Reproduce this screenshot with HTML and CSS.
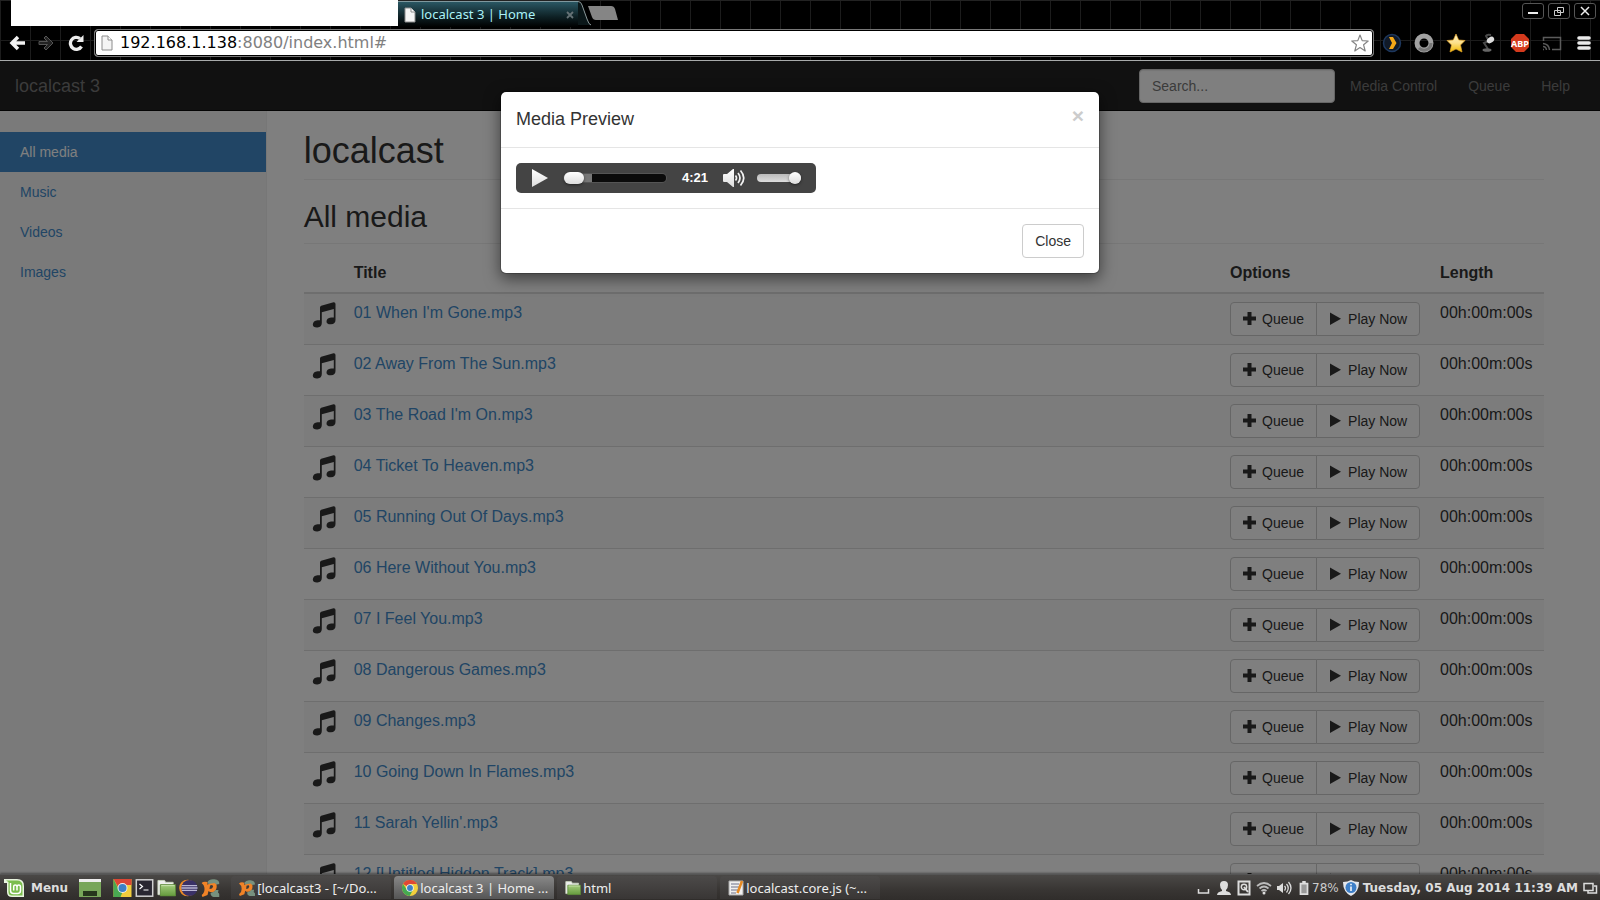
FILE: index.html
```html
<!DOCTYPE html>
<html lang="en">
<head>
<meta charset="utf-8">
<title>localcast 3 | Home</title>
<link rel="stylesheet" href="styles.css">
</head>
<body>
<svg class="defs" aria-hidden="true">
  <defs>
    <linearGradient id="gold" x1="0" y1="0" x2="0" y2="1"><stop offset="0" stop-color="#fff3c8"/><stop offset=".5" stop-color="#fce08a"/><stop offset="1" stop-color="#f2bb00"/></linearGradient>
    <linearGradient id="silver" x1="0" y1="0" x2="0" y2="1"><stop offset="0" stop-color="#fff"/><stop offset="1" stop-color="#ddd"/></linearGradient>
    <linearGradient id="leaf" x1="0" y1="0" x2="0" y2="1"><stop offset="0" stop-color="#a3cc7c"/><stop offset="1" stop-color="#649a3c"/></linearGradient>
    <symbol id="music" viewBox="0 0 24 26"><path d="M8 5.500 Q8 4.300 9.200 3.800 L21.500 .2 Q23.500 0 23.500 2 V18 Q23.500 22 19 22.300 Q14.500 22.500 14.500 19.500 Q14.500 16 19 15.500 L21.800 15.600 V7 L9.800 10.300 V21 Q9.800 25 5.500 25.500 Q.8 25.700 .8 22.500 Q1 18.800 5.500 18.200 L8 18.300 Z"/></symbol>
    <symbol id="plus" viewBox="0 0 14 14"><path d="M4.500 0h4v4.500H13v4H8.500V13h-4V8.500H0v-4h4.500z"/></symbol>
    <symbol id="play" viewBox="0 0 14 14"><path d="M1 .5 12 6.700 1 13z"/></symbol>
    <symbol id="page" viewBox="0 0 12 16"><path d="M1 1h6l4 4v10H1z" fill="#f4f4f4" stroke="#8c8c8c"/><path d="M7 1v4h4" fill="#fff" stroke="#8c8c8c"/></symbol>
    <symbol id="chrome" viewBox="0 0 18 18"><circle cx="9" cy="9" r="9" fill="#f3cf3d"/><path d="M9 9 1.200 4.500A9 9 0 0 1 16.800 4.500H9z" fill="#df4735"/><path d="M1.200 4.500A9 9 0 0 0 8.600 18L12.500 11 9 9 5.500 11z" fill="#45a951"/><circle cx="9" cy="9" r="4.200" fill="#f5f5f5"/><circle cx="9" cy="9" r="3.300" fill="#3d80c5"/></symbol>
    <symbol id="folder" viewBox="0 0 20 18"><path d="M1 1h7l1 2h8v13H1z" fill="#eee" stroke="#c9d5bd"/><path d="M3.500 5.500h16v12h-16z" fill="url(#leaf)" stroke="#5c8939"/><path d="M4.500 6.500h14" stroke="#cbe5b0"/></symbol>
    <symbol id="aptana" viewBox="0 0 18 18"><path d="M0 4Q2 2 6 3v3l3-3q4-1 6 2 1 6-3 8-3 1-5-1l-1 4-5 2-1-2q3-2 3-6Q3 6 0 4z" fill="#f08327"/><path d="M8.500 6.500q3-1.500 3 1-.5 2.500-3.500 2.500z" fill="#3c3937"/><path d="M6 3Q8-.5 13 .3q5 .7 5 4.700l-3 .5-2-1.500-6 1z" fill="#77917f"/><path d="M9 14q4-1 5-3h3l-.5 2.500 1.500 1.500v3h-6q-3-1-3-4z" fill="#77917f"/></symbol>
  </defs>
</svg>

<div class="screen">
  <header class="browser">
    <div class="tabs">
      <div class="blank-tab"></div>
      <div class="tab">
        <svg class="tab-page"><use href="#page"/></svg>
        <span class="tab-title">localcast 3 | Home</span>
        <button class="tab-close" aria-label="Close tab"><svg viewBox="0 0 8 8"><path d="M1 1l6 6M7 1 1 7" stroke="#667276" stroke-width="1.800"/></svg></button>
      </div>
      <svg class="tab-edge" viewBox="0 0 14 26"><path d="M0 1.500Q3 1.500 4 5l5 14q2 6 4 6H0z" fill="#0b1719"/><path d="M0 1.500Q3 1.500 4 5l5 14q2 6 4 6" fill="none" stroke="#8c999b"/></svg>
      <button class="new-tab" aria-label="New tab"><svg viewBox="0 0 31 14"><path d="M0 0h23q3 0 4 3l3 11H8q-3 0-4-3z" fill="#858585"/></svg></button>
      <div class="window-buttons">
        <button aria-label="Minimize"><svg viewBox="0 0 20 14"><path d="M5 9h10" stroke="#eee" stroke-width="2"/></svg></button>
        <button aria-label="Restore"><svg viewBox="0 0 20 14"><path d="M8.500 3.500h6v5h-6zM5.500 6.500h6v5h-6z" fill="none" stroke="#ccc"/></svg></button>
        <button aria-label="Close window"><svg viewBox="0 0 20 14"><path d="M6 3l8 8M14 3l-8 8" stroke="#eee" stroke-width="1.500"/></svg></button>
      </div>
    </div>
    <div class="toolbar">
      <div class="tools">
        <button aria-label="Back"><svg viewBox="0 0 18 16"><path d="M16 8H3M9 2 3 8l6 6" fill="none" stroke="#f2f2f2" stroke-width="3.500"/></svg></button>
        <button aria-label="Forward"><svg viewBox="0 0 18 16"><path d="M1 6.500h8.500L6 3l2-2 7 7-7 7-2-2 3.500-3.500H1z" fill="#222" stroke="#555"/></svg></button>
        <button aria-label="Reload"><svg viewBox="0 0 18 16"><path d="M14.500 11.500A6 6 0 1 1 13 3.500" fill="none" stroke="#eee" stroke-width="3.300"/><path d="M16.500 0v7H9.500z" fill="#eee"/></svg></button>
      </div>
      <div class="address">
        <svg class="address-page"><use href="#page"/></svg>
        <span class="url">192.168.1.138<span class="path">:8080/index.html#</span></span>
        <button aria-label="Bookmark this page"><svg class="star" viewBox="0 0 18 18"><path d="M9 1l2.200 5.600 6 .4-4.600 3.800L14.200 17 9 13.500 3.800 17l1.600-6.200L.8 7l6-.4z" fill="#fff" stroke="#858585" stroke-width="1.200" stroke-linejoin="round"/></svg></button>
      </div>
      <div class="extensions">
        <button aria-label="Play extension"><svg viewBox="0 0 20 20"><circle cx="10" cy="10" r="8.500" fill="#111a28" stroke="#1d375d" stroke-width="1.500"/><path d="M7 4h4l3.500 6L11 16H7l3-6z" fill="#f5a817"/></svg></button>
        <button aria-label="Ring extension"><svg viewBox="0 0 20 20"><circle cx="10" cy="10" r="7" fill="none" stroke="#a2a2a2" stroke-width="5"/><path d="M5 15a7 7 0 0 0 12-5" fill="none" stroke="#777" stroke-width="3"/></svg></button>
        <button aria-label="Star extension"><svg viewBox="0 0 20 20"><path d="M10 1l2.700 6 6.300.5-4.500 4.500 1.500 7-6-3-6 3 1.500-7L1 7.500 7.300 7z" fill="url(#gold)" stroke="#e4a52b" stroke-width=".7"/></svg></button>
        <button aria-label="Lamp extension"><svg viewBox="0 0 20 20"><path d="M13 2Q9 1 8 3l3 5-5 2 4 6" fill="none" stroke="#4a4a4a" stroke-width="2"/><ellipse cx="12.500" cy="7" rx="4" ry="2.800" transform="rotate(-35 12.500 7)" fill="#ddd"/><ellipse cx="9" cy="17" rx="4.500" ry="1.800" fill="#666"/></svg></button>
        <button aria-label="Adblock Plus"><svg viewBox="0 0 20 20"><path d="M6 1h8l5 5v8l-5 5H6l-5-5V6z" fill="#d43a1d"/><text x="10" y="13.500" text-anchor="middle" class="abp">ABP</text></svg></button>
        <button aria-label="Cast"><svg viewBox="0 0 20 20"><path d="M1.500 8V4.500h17v12H10M1 16.500h1M1 13.500q3 0 3.500 3.500M1 10.500q6 .5 6.500 6.500" fill="none" stroke="#5b5b5b" stroke-width="1.500"/></svg></button>
        <button aria-label="Browser menu"><svg viewBox="0 0 20 20"><path d="M5 5h10M5 10h10M5 15h10" stroke="#eaeaea" stroke-width="3.600" stroke-linecap="round"/></svg></button>
      </div>
    </div>
  </header>

  <div class="viewport">
    <nav class="navbar">
      <a class="brand" href="#">localcast 3</a>
      <input class="search" type="text" placeholder="Search..." aria-label="Search">
      <div class="nav-links"><a href="#">Media Control</a><a href="#">Queue</a><a href="#">Help</a></div>
    </nav>
    <div class="columns">
      <aside class="sidebar"><a class="active" href="#">All media</a><a href="#">Music</a><a href="#">Videos</a><a href="#">Images</a></aside>
      <main class="main">
        <h1>localcast</h1>
        <h2>All media</h2>
        <table class="media">
          <colgroup><col class="col-icon"><col><col class="col-options"><col class="col-length"></colgroup>
          <thead><tr><th></th><th>Title</th><th>Options</th><th>Length</th></tr></thead>
          <tbody>
            <tr><td><svg class="note"><use href="#music"/></svg></td><td><a href="#">01 When I'm Gone.mp3</a></td><td><div class="group"><button><svg><use href="#plus"/></svg>Queue</button><button><svg><use href="#play"/></svg>Play Now</button></div></td><td>00h:00m:00s</td></tr>
            <tr><td><svg class="note"><use href="#music"/></svg></td><td><a href="#">02 Away From The Sun.mp3</a></td><td><div class="group"><button><svg><use href="#plus"/></svg>Queue</button><button><svg><use href="#play"/></svg>Play Now</button></div></td><td>00h:00m:00s</td></tr>
            <tr><td><svg class="note"><use href="#music"/></svg></td><td><a href="#">03 The Road I'm On.mp3</a></td><td><div class="group"><button><svg><use href="#plus"/></svg>Queue</button><button><svg><use href="#play"/></svg>Play Now</button></div></td><td>00h:00m:00s</td></tr>
            <tr><td><svg class="note"><use href="#music"/></svg></td><td><a href="#">04 Ticket To Heaven.mp3</a></td><td><div class="group"><button><svg><use href="#plus"/></svg>Queue</button><button><svg><use href="#play"/></svg>Play Now</button></div></td><td>00h:00m:00s</td></tr>
            <tr><td><svg class="note"><use href="#music"/></svg></td><td><a href="#">05 Running Out Of Days.mp3</a></td><td><div class="group"><button><svg><use href="#plus"/></svg>Queue</button><button><svg><use href="#play"/></svg>Play Now</button></div></td><td>00h:00m:00s</td></tr>
            <tr><td><svg class="note"><use href="#music"/></svg></td><td><a href="#">06 Here Without You.mp3</a></td><td><div class="group"><button><svg><use href="#plus"/></svg>Queue</button><button><svg><use href="#play"/></svg>Play Now</button></div></td><td>00h:00m:00s</td></tr>
            <tr><td><svg class="note"><use href="#music"/></svg></td><td><a href="#">07 I Feel You.mp3</a></td><td><div class="group"><button><svg><use href="#plus"/></svg>Queue</button><button><svg><use href="#play"/></svg>Play Now</button></div></td><td>00h:00m:00s</td></tr>
            <tr><td><svg class="note"><use href="#music"/></svg></td><td><a href="#">08 Dangerous Games.mp3</a></td><td><div class="group"><button><svg><use href="#plus"/></svg>Queue</button><button><svg><use href="#play"/></svg>Play Now</button></div></td><td>00h:00m:00s</td></tr>
            <tr><td><svg class="note"><use href="#music"/></svg></td><td><a href="#">09 Changes.mp3</a></td><td><div class="group"><button><svg><use href="#plus"/></svg>Queue</button><button><svg><use href="#play"/></svg>Play Now</button></div></td><td>00h:00m:00s</td></tr>
            <tr><td><svg class="note"><use href="#music"/></svg></td><td><a href="#">10 Going Down In Flames.mp3</a></td><td><div class="group"><button><svg><use href="#plus"/></svg>Queue</button><button><svg><use href="#play"/></svg>Play Now</button></div></td><td>00h:00m:00s</td></tr>
            <tr><td><svg class="note"><use href="#music"/></svg></td><td><a href="#">11 Sarah Yellin'.mp3</a></td><td><div class="group"><button><svg><use href="#plus"/></svg>Queue</button><button><svg><use href="#play"/></svg>Play Now</button></div></td><td>00h:00m:00s</td></tr>
            <tr><td><svg class="note"><use href="#music"/></svg></td><td><a href="#">12 [Untitled Hidden Track].mp3</a></td><td><div class="group"><button><svg><use href="#plus"/></svg>Queue</button><button><svg><use href="#play"/></svg>Play Now</button></div></td><td>00h:00m:00s</td></tr>
          </tbody>
        </table>
      </main>
    </div>

    <div class="backdrop">
      <section class="modal" role="dialog" aria-labelledby="modal-title">
        <div class="modal-header">
          <h4 id="modal-title">Media Preview</h4>
          <button class="dismiss" aria-label="Dismiss">×</button>
        </div>
        <div class="modal-body">
          <div class="player">
            <button aria-label="Play"><svg class="player-play" viewBox="0 0 16 18"><path d="M0 0 16 9 0 18z" fill="url(#silver)"/></svg></button>
            <input class="seek" type="range" min="0" max="100" value="0" aria-label="Position">
            <span class="time">4:21</span>
            <button aria-label="Mute"><svg class="speaker" viewBox="0 0 22 18"><path d="M0 6q0-1 1-1h3l6-5h1v18h-1l-6-5H1q-1 0-1-1z" fill="url(#silver)"/><path d="M12.500 6.500q2 2.500 0 5M15 4q4 5 0 10M17.500 1.500q6.500 7.500 0 15" fill="none" stroke="#f2f2f2" stroke-width="1.700"/></svg></button>
            <input class="volume" type="range" min="0" max="100" value="100" aria-label="Volume">
          </div>
        </div>
        <div class="modal-footer"><button class="close">Close</button></div>
      </section>
    </div>
  </div>

  <footer class="taskbar">
    <button class="menu"><svg viewBox="0 0 20 18"><path d="M0 0h13q7 0 7 7v11H8q-5 0-5-5V4H0z" fill="#e9f5df"/><path d="M2 1.500h11q5.500 0 5.500 5.500v9.500H8q-3.500 0-3.500-3.500V3z" fill="#7bbd4d"/><path d="M6.500 4v7.500q0 3 3 3h4q3 0 3-3V8q0-2-1.700-2T13 8v3.500V8q0-2-1.700-2T9.700 8v3.500" fill="none" stroke="#fff" stroke-width="1.500"/></svg>Menu</button>
    <div class="launchers">
      <button class="desktop" aria-label="Show desktop"><svg viewBox="0 0 22 18"><path d="M0 0h22v18H0z" fill="#78a65a"/><path d="M0 0h22v3H0z" fill="#ededed"/><path d="M4 12h14v5H4z" fill="#26361c"/></svg></button>
      <button aria-label="Chrome"><svg viewBox="0 0 18 18"><rect width="18" height="18" fill="#f1cd3c"/><path d="M0 0h18v6H9L5 9z" fill="#dc4635"/><path d="M0 0 5.500 11 9 13 7 18H0z" fill="#49a952"/><circle cx="9" cy="9" r="5" fill="#eee"/><circle cx="9" cy="9" r="4" fill="#3d80c5"/></svg></button>
      <button aria-label="Terminal"><svg viewBox="0 0 18 18"><rect x=".8" y=".8" width="16.400" height="16.400" fill="#292731" stroke="#cfcfcf" stroke-width="1.500"/><path d="M4 5l3 2.500L4 10M8 11h5" fill="none" stroke="#fff" stroke-width="1.200"/></svg></button>
      <button aria-label="Files"><svg viewBox="0 0 20 18"><use href="#folder"/></svg></button>
      <button aria-label="Eclipse"><svg viewBox="0 0 20 18"><circle cx="9" cy="9" r="8.800" fill="#ef8b26"/><circle cx="11" cy="9" r="8.500" fill="#3a3166"/><path d="M3 6.500h16M2.500 9h17M3 11.500h16" stroke="#b9b5d2" stroke-width="1.500"/></svg></button>
      <button aria-label="Aptana"><svg viewBox="0 0 18 18"><use href="#aptana"/></svg></button>
    </div>
    <div class="tasks">
      <button><svg viewBox="0 0 18 18"><use href="#aptana"/></svg>[localcast3 - [~/Do...</button>
      <button class="current"><svg viewBox="0 0 18 18"><use href="#chrome"/></svg>localcast 3 | Home ...</button>
      <button><svg viewBox="0 0 20 18"><use href="#folder"/></svg>html</button>
      <button><svg viewBox="0 0 16 16"><path d="M1 1h14v14H1z" fill="#f0f0f0" stroke="#aaa"/><path d="M3 4h8M3 7h8M3 10h8M3 13h5" stroke="#6d7188"/><path d="M14 1 9.500 13" stroke="#e58a24" stroke-width="2.500"/></svg>localcast.core.js (~...</button>
    </div>
    <div class="tray">
      <svg viewBox="0 0 16 16"><path d="M2.500 9v4h10V9" fill="none" stroke="#ddd" stroke-width="1.500"/></svg>
      <svg viewBox="0 0 16 16"><path d="M8 1q4 0 4 4 0 3-2 5v1q5 1 5 4H1q0-3 5-4v-1Q4 8 4 5q0-4 4-4z" fill="#ddd"/></svg>
      <svg viewBox="0 0 16 16"><rect x="2.500" y="1.500" width="11" height="13" fill="none" stroke="#ddd" stroke-width="2"/><circle cx="8" cy="7" r="2.700" fill="none" stroke="#ddd" stroke-width="1.500"/><path d="M8 7l4 5" stroke="#ddd" stroke-width="2"/></svg>
      <svg viewBox="0 0 16 16"><path d="M1 6q7-6 14 0M3.500 8.500q4.500-4 9 0M5.500 11q2.500-2 5 0" fill="none" stroke="#bbb" stroke-width="1.700"/><circle cx="8" cy="13" r="1.500" fill="#ddd"/></svg>
      <svg viewBox="0 0 16 16"><path d="M1 6h2l4-3v10l-4-3H1z" fill="#ddd"/><path d="M8.500 6q2 2 0 4.500M10.500 4q3.500 4 0 8.500M12.500 2q5 6 0 12" fill="none" stroke="#ddd" stroke-width="1.300"/></svg>
      <span class="battery"><svg viewBox="0 0 10 16"><path d="M3 0h4v2h3v14H0V2h3z" fill="#ddd"/><path d="M2 4h6v10H2z" fill="#999"/></svg>78%</span>
      <svg viewBox="0 0 16 16"><path d="M8 0q3 2 8 2 0 10-8 14Q0 12 0 2q5 0 8-2z" fill="#e4e7ec"/><circle cx="8" cy="7.500" r="5.500" fill="#3e7fc7"/><path d="M8 6.500V11M8 3.800v1.500" stroke="#fff" stroke-width="1.500"/></svg>
      <time class="clock">Tuesday, 05 Aug 2014 11:39 AM</time>
      <svg viewBox="0 0 16 16"><path d="M2 3.500h9v7H2zM12 6h2.500v7H6v-2.500" fill="none" stroke="#ddd" stroke-width="1.500"/></svg>
    </div>
  </footer>
</div>
</body>
</html>
```
FILE: styles.css
```css
* { box-sizing: border-box; }
body { margin: 0; font: 14px/20px "Liberation Sans", Arial, sans-serif; color: #333; }
button { font: inherit; color: inherit; border: 0; padding: 0; background: none; }
a { color: #428bca; text-decoration: none; }
svg { display: block; flex: none; }
.defs { position: absolute; width: 0; height: 0; }
.screen { display: flex; flex-direction: column; height: 100vh; overflow: hidden; }

/* Browser frame */
.browser {
  flex: none;
  border-bottom: 1px solid #a8abab;
  background:
    linear-gradient(#222, #222) 0 0 / 100% 1px no-repeat,
    linear-gradient(#1c1c1c, #1c1c1c) 0 40px / 100% 1px no-repeat,
    repeating-linear-gradient(90deg, #1c1c1c 0 1px, transparent 1px 30px),
    #000;
  font-family: "DejaVu Sans", sans-serif;
}
.tabs { display: flex; height: 27px; padding: 0 4px 0 11px; }
.blank-tab { width: 387px; height: 26px; background: #fff; }
.tab {
  display: flex; align-items: center; width: 180px; height: 26px; margin-top: 1px; padding: 0 4px 0 6px;
  border-top: 1px solid #7f989e;
  background: linear-gradient(#2a5763, #0e2024 60%, #000);
  color: #aaf2f8;
  font: 13px/20px "Noto Sans", sans-serif;
}
.tab-page { width: 12px; height: 16px; margin-right: 5px; }
.tab-title { margin-bottom: 2px; }
.tab-close { margin-left: auto; }
.tab-close svg { width: 8px; height: 8px; }
.tab-edge { width: 14px; height: 26px; }
.new-tab { align-self: flex-start; margin: 6px 0 0 -4px; }
.new-tab svg { width: 31px; height: 14px; }
.window-buttons { display: flex; gap: 4px; margin: 3px 0 0 auto; }
.window-buttons button { width: 22px; height: 16px; border: 1px solid #555; border-radius: 3px; background: #000; }
.window-buttons svg { width: 20px; height: 14px; }
.toolbar { display: flex; align-items: center; height: 33px; padding: 0 6px 2px 9px; }
.tools { display: flex; gap: 11px; margin-right: 9px; }
.tools svg { width: 18px; height: 16px; }
.address {
  display: flex; align-items: center; flex: 1; height: 28px; padding: 0 4px 0 6px;
  border: 1px solid #777; border-radius: 4px; background: #fff; box-shadow: inset 0 0 0 1px #000;
}
.address-page { width: 12px; height: 16px; margin-right: 7px; }
.url { flex: 1; color: #000; font-size: 16px; }
.path { color: #808080; }
.star { width: 18px; height: 18px; }
.extensions { display: flex; gap: 12px; margin-left: 8px; }
.extensions svg { width: 20px; height: 20px; }
.abp { font: bold 9px "Noto Sans", sans-serif; fill: #fff; }

/* Page */
.viewport { position: relative; display: flex; flex-direction: column; flex: 1; min-height: 0; overflow: hidden; background: #fff; }
.navbar { display: flex; align-items: center; flex: none; height: 50px; padding: 0 30px 0 15px; border-bottom: 1px solid #080808; background: #222; }
.navbar a { color: #777; }
.navbar .brand { margin-right: auto; font-size: 18px; }
.search { width: 196px; height: 34px; padding: 6px 12px; border: 1px solid #ccc; border-radius: 4px; font: inherit; box-shadow: inset 0 1px 1px rgba(0,0,0,.08); }
.search::placeholder { color: #777; }
.nav-links { display: flex; gap: 31px; margin-left: 15px; }
.columns { display: flex; flex: 1; min-height: 0; }
.sidebar { flex: none; width: 16.667%; padding-top: 21px; border-right: 1px solid #eee; background: #f5f5f5; }
.sidebar a { display: block; padding: 10px 20px; }
.sidebar .active { background: #428bca; color: #fff; }
.main { flex: 1; min-width: 0; padding: 21px 56px 0 37px; }
h1, h2, h4 { margin: 0; font-weight: 500; }
h1 { padding-bottom: 9px; border-bottom: 1px solid #eee; font-size: 36px; line-height: 38px; }
h2 { margin-top: 20px; padding-bottom: 10px; border-bottom: 1px solid #eee; font-size: 30px; line-height: 33px; }
.media { width: 100%; margin-top: 9px; table-layout: fixed; border-spacing: 0; font-size: 16px; line-height: 21px; }
.col-icon { width: 42px; }
.col-options { width: 210px; }
.col-length { width: 112px; }
.media th, .media td { padding: 8px; text-align: left; vertical-align: top; white-space: nowrap; }
.media th { border-bottom: 2px solid #ddd; line-height: 23px; }
.media tr + tr td { border-top: 1px solid #ddd; }
.media tbody tr:nth-child(odd) { background: #f9f9f9; }
.note { width: 24px; height: 26px; fill: #333; }
.group { display: flex; font-size: 14px; line-height: 20px; }
.group button { display: flex; align-items: center; gap: 5px; height: 34px; padding: 0 12px; border: 1px solid #ccc; background: #fff; }
.group button:first-child { border-radius: 4px 0 0 4px; }
.group button:last-child { margin-left: -1px; border-radius: 0 4px 4px 0; }
.group svg { width: 14px; height: 14px; fill: #333; }

/* Modal */
.backdrop { position: absolute; inset: 0; padding-top: 30px; background: rgba(0,0,0,.5); }
.modal { width: 600px; margin: 0 auto; border: 1px solid rgba(0,0,0,.2); border-radius: 6px; background: #fff; background-clip: padding-box; box-shadow: 0 5px 15px rgba(0,0,0,.5); }
.modal-header { display: flex; justify-content: space-between; padding: 15px; border-bottom: 1px solid #e5e5e5; }
.modal-header h4 { font-size: 18px; line-height: 25px; }
.dismiss { height: 21px; margin-top: -2px; color: #ccc; font-size: 21px; font-weight: bold; line-height: 21px; }
.modal-body { padding: 15px; }
.modal-footer { display: flex; justify-content: flex-end; padding: 15px; border-top: 1px solid #e5e5e5; }
.close { height: 34px; padding: 0 12px; border: 1px solid #ccc; border-radius: 4px; }
.player { display: flex; align-items: center; width: 300px; height: 30px; padding: 0 15px 0 16px; border-radius: 5px; background: #444; }
.player-play { width: 16px; height: 18px; }
.speaker { width: 22px; height: 18px; }
.time { margin: 0 15px 0 16px; color: #fff; font-size: 13px; font-weight: bold; }
.player input { height: 8px; margin: 0; border-radius: 4px; appearance: none; }
.player .seek { flex: 1; min-width: 0; margin-left: 16px; background: linear-gradient(90deg, #777 0 28px, #0b0b0b 28px); box-shadow: 0 0 0 1px #555; }
.seek::-webkit-slider-thumb { width: 20px; height: 12px; border-radius: 6px; background: linear-gradient(#fff, #ddd); box-shadow: 0 1px 3px rgba(0,0,0,.5); appearance: none; }
.player .volume { width: 44px; margin-left: 12px; background: linear-gradient(#bbb, #ddd); }
.volume::-webkit-slider-thumb { width: 12px; height: 12px; border-radius: 50%; background: linear-gradient(#fff, #ddd); box-shadow: 0 1px 3px rgba(0,0,0,.5); appearance: none; }

/* Desktop panel */
.taskbar {
  position: relative; display: flex; align-items: center; flex: none; height: 26px; padding: 0 2px 0 4px;
  border-top: 1px solid #555; background: linear-gradient(#4a4846, #383533 60%, #302d2b);
  box-shadow: 0 -1px 2px rgba(0,0,0,.4);
  color: #eee; font: 12px/20px "DejaVu Sans", sans-serif;
}
.menu { display: flex; align-items: center; gap: 7px; font-weight: bold; color: #ddd; }
.menu svg { width: 20px; height: 18px; }
.launchers { display: flex; align-items: center; gap: 3px; margin-left: 11px; }
.launchers svg { width: 19px; height: 18px; }
.launchers .desktop { margin-right: 9px; }
.launchers .desktop svg { width: 22px; }
.tasks { display: flex; gap: 3px; margin-left: 11px; }
.tasks button { display: flex; align-items: center; gap: 2px; width: 160px; height: 23px; padding: 0 8px; border-radius: 4px 4px 0 0; background: linear-gradient(#4c4a49, #393635); font: 13px/20px "Noto Sans", sans-serif; white-space: nowrap; }
.tasks .current { background: linear-gradient(#888, #555); }
.tasks svg { width: 16px; height: 16px; }
.tray { display: flex; align-items: center; gap: 4px; margin-left: auto; }
.tray svg { width: 16px; height: 16px; }
.battery { display: flex; align-items: center; gap: 3px; margin-left: 3px; color: #ccc; }
.battery svg { width: 10px; height: 14px; }
.clock { font-weight: bold; color: #ddd; }
```
